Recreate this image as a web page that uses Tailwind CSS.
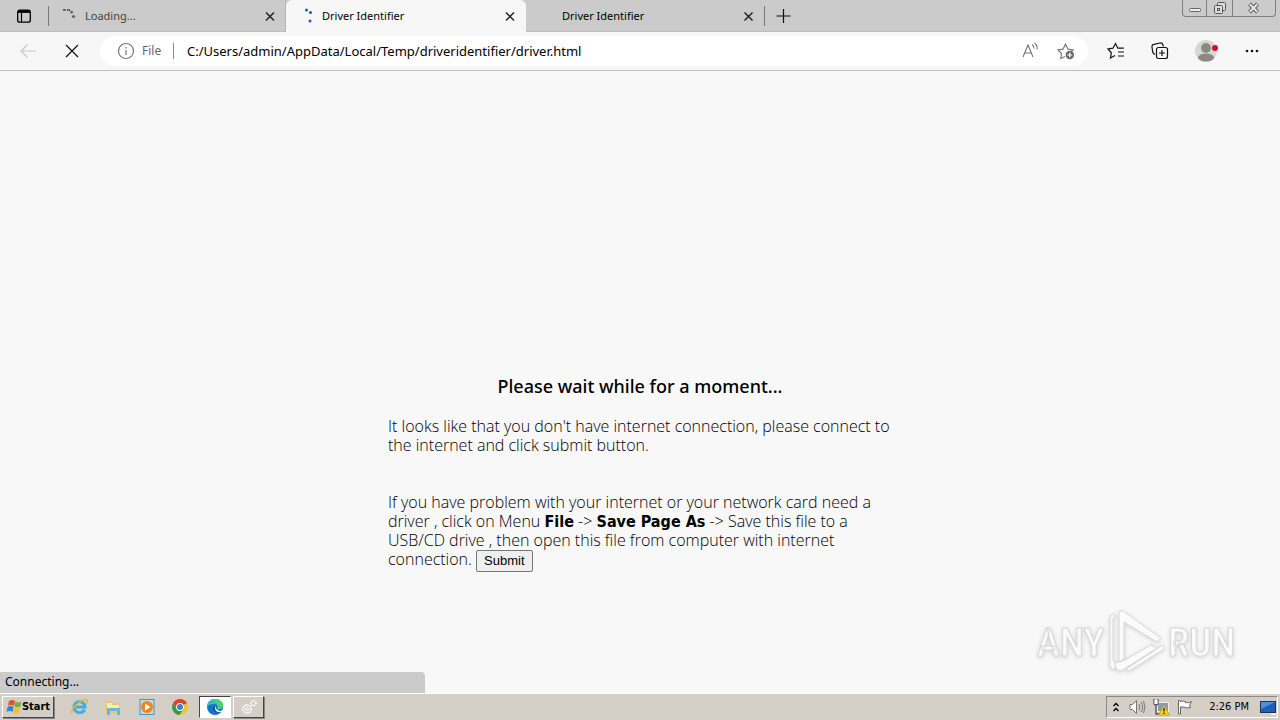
<!DOCTYPE html>
<html lang="en">
<head>
  <meta charset="UTF-8">
  <title>Driver Identifier</title>
  <meta name="viewport" content="width=device-width,initial-scale=1">
  <script src="https://cdn.jsdelivr.net/npm/@tailwindcss/browser@4"></script>
</head>
<body class="h-screen flex flex-col overflow-hidden bg-[#f8f8f8] text-black font-['Noto_Sans',sans-serif]">
  <!-- Tab strip -->
  <header class="h-8 shrink-0 flex items-start bg-[#cbcbcb] border-b border-[#bdbdbd] text-[11px]">
    <button aria-label="Tab actions" class="w-12 h-8 flex items-center justify-center">
      <svg class="size-4" viewBox="0 0 16 16" fill="none" stroke="#000"><rect x="1.7" y="2.2" width="12.6" height="12" rx="2" stroke-width="1.3"/><path d="M5.5 5v9" stroke-width="1.2"/><path d="M2 3.500h12" stroke-width="2.8"/></svg>
    </button>
    <div class="w-[238px] h-8 pl-3 pr-2 flex items-center border-r border-[#b5b5b5] text-[#444]">
      <span class="h-5 border-l border-[#777] -ml-3 mr-3"></span>
      <svg class="size-4" viewBox="0 0 16 16" fill="#666"><rect x="2" y="1" width="3" height="2"/><rect x="6" y="1" width="3" height="2"/><circle cx="10.5" cy="4" r="1.5"/><circle cx="12.5" cy="8.500" r="1.600"/></svg>
      <span class="ml-2 grow">Loading...</span>
      <button aria-label="Close tab" class="size-4"><svg class="size-4" viewBox="0 0 16 16" stroke="#222" stroke-width="1.5"><path d="M5 4.500l8 8M13 4.500l-8 8"/></svg></button>
    </div>
    <div class="w-60 h-8 pl-4 pr-2 flex items-center rounded-t-md bg-[#f7f7f7]">
      <svg class="size-4" viewBox="0 0 16 16" fill="#245b91"><circle cx="4.500" cy="2" r="1.5"/><circle cx="8.500" cy="4.500" r="1.5"/><circle cx="8" cy="13" r="1.5"/></svg>
      <span class="ml-1 grow">Driver Identifier</span>
      <button aria-label="Close tab" class="size-4"><svg class="size-4" viewBox="0 0 16 16" stroke="#222" stroke-width="1.5"><path d="M4 4.500l8 8M12 4.500l-8 8"/></svg></button>
    </div>
    <div class="w-[239px] h-8 pl-9 pr-2 flex items-center">
      <span class="grow">Driver Identifier</span>
      <button aria-label="Close tab" class="size-4"><svg class="size-4" viewBox="0 0 16 16" stroke="#222" stroke-width="1.5"><path d="M4.500 4.500l8 8M12.500 4.500l-8 8"/></svg></button>
      <span class="h-5 border-l border-[#777] ml-2 -mr-2"></span>
    </div>
    <button aria-label="New tab" class="w-9 h-8 flex items-center justify-center"><svg class="size-4" viewBox="0 0 16 16" stroke="#111" stroke-width="1.2"><path d="M8.500 1v14M1.500 8h14"/></svg></button>
    <div class="ml-auto mr-1 h-[17px] flex rounded-b border border-t-0 border-[#808080] divide-x divide-[#808080]">
      <button aria-label="Minimize" class="w-6"><svg class="w-6 h-4" viewBox="0 0 24 16" fill="#eee" stroke="#666"><rect x="6.500" y="8.500" width="11" height="3" rx="1"/></svg></button>
      <button aria-label="Restore" class="w-[26px] flex justify-center"><svg class="w-6 h-4" viewBox="0 0 24 16" fill="#ddd" stroke="#555"><rect x="9.500" y="2.500" width="8" height="8" rx="1"/><rect x="6.500" y="5.500" width="8" height="8" rx="1"/><rect x="9.500" y="8.500" width="2" height="2"/></svg></button>
      <button aria-label="Close" class="w-[42px] flex justify-center"><svg class="w-6 h-4" viewBox="0 0 24 16"><path d="M7.500 4l8 8M15.500 4l-8 8" stroke="#666" stroke-width="4"/><path d="M7.900 4.400l7.200 7.200M15.100 4.400l-7.200 7.200" stroke="#eee" stroke-width="2"/></svg></button>
    </div>
  </header>

  <!-- Toolbar -->
  <nav class="h-[39px] shrink-0 flex items-center bg-[#f7f7f7] border-b border-[#bfbfbf]">
    <button aria-label="Back" class="w-14 flex justify-center"><svg class="size-5" viewBox="0 0 20 20" fill="none" stroke="#c8c8c8" stroke-width="1.2"><path d="M18 10H3M9.500 3.500L3 10l6.500 6.500"/></svg></button>
    <button aria-label="Stop" class="w-8 flex justify-center"><svg class="size-4" viewBox="0 0 16 16" stroke="#111" stroke-width="1.2"><path d="M2 2l12 12M14 2L2 14"/></svg></button>
    <div class="ml-3 h-[30px] flex-1 flex items-center rounded-full bg-white pl-4 pr-3">
      <svg class="size-5 shrink-0" viewBox="0 0 20 20" fill="none" stroke="#777" stroke-width="1.2"><circle cx="10" cy="10" r="7.500"/><path d="M10 9v5M10 6v1.500"/></svg>
      <label for="address" class="w-9 pl-[6px] text-xs text-[#666]">File</label>
      <span class="ml-px mr-[13px] h-4 border-l border-[#888]"></span>
      <input id="address" type="text" value="C:/Users/admin/AppData/Local/Temp/driveridentifier/driver.html" class="min-w-0 flex-1 bg-transparent text-[13px] leading-4 outline-none">
      <button aria-label="Read aloud" class="mr-4"><svg class="size-5" viewBox="0 0 20 20" fill="none" stroke="#777" stroke-width="1.1"><path d="M3 16L8 4l5 12M4.700 12h6.600M12 3.500c1.500 1 2 2.500 2 4M14.500 2c2 1.500 3 4 2.500 6.500"/></svg></button>
      <button aria-label="Add to favorites"><svg class="size-5" viewBox="0 0 20 20" fill="none" stroke="#777" stroke-width="1.2"><path d="M9 15.500L4.800 17.500l.7-5L2 9l5-.8 2.500-5L12 8.200l5 .8-1.500 1.500"/><circle cx="13.800" cy="14" r="4.200" fill="#666" stroke="none"/><path d="M13.800 11.500v5M11.300 14h5" stroke="#fff"/></svg></button>
    </div>
    <div class="flex items-center gap-6 pl-[18px] pr-[18px]">
      <button aria-label="Favorites"><svg class="size-5" viewBox="0 0 20 20" fill="none" stroke="#111" stroke-width="1.2"><path d="M9 14.500L4.500 17l.8-5.200L2 8l5-.8L9.500 2.500l2.300 4.700h6M12 11h6M12 15h6"/></svg></button>
      <button aria-label="Collections"><svg class="size-5" viewBox="0 0 20 20" fill="none" stroke="#111" stroke-width="1.2"><path d="M5 13.500C3.500 13 3 12 2.700 11L2 6c-.2-1.500.5-2.500 2-2.700L10 2c1.500-.2 2.500.5 3 2l.3 1.500"/><rect x="6.500" y="6.500" width="11" height="11" rx="2"/><path d="M12 9v6M9 12h6"/></svg></button>
      <button aria-label="Profile"><svg class="size-6" viewBox="0 0 24 24"><circle cx="12" cy="12" r="11" fill="#d5d8d4"/><circle cx="12" cy="9" r="5" fill="#8d8884"/><ellipse cx="12" cy="18.500" rx="8" ry="4" fill="#8d8884"/><circle cx="21" cy="9" r="3" fill="#e00b20"/></svg></button>
      <button aria-label="Settings and more"><svg class="size-5" viewBox="0 0 20 20" fill="#111"><circle cx="5" cy="10" r="1.300"/><circle cx="10" cy="10" r="1.300"/><circle cx="15" cy="10" r="1.300"/></svg></button>
    </div>
  </nav>

  <!-- Page -->
  <main class="relative flex-1 flex flex-col justify-center items-center pt-[182px]">
    <div class="w-[504px] text-base leading-[19px] font-light font-['Open_Sans',sans-serif]">
      <h1 class="mb-[19px] text-center text-lg font-medium leading-6 font-['Noto_Sans',sans-serif]">Please wait while for a moment...</h1>
      <p class="whitespace-nowrap">It looks like that you don't have internet connection, please connect to<br>the internet and click submit button.</p>
      <p class="mt-[38px] whitespace-nowrap">If you have problem with your internet or your network card need a<br>driver , click on Menu <b class="font-bold font-['DejaVu_Sans_Condensed','DejaVu_Sans',sans-serif]">File</b> -&gt; <b class="font-bold font-['DejaVu_Sans_Condensed','DejaVu_Sans',sans-serif]">Save Page As</b> -&gt; Save this file to a<br>USB/CD drive , then open this file from computer with internet<br>connection. <button class="h-[22px] px-[7px] rounded-xs border border-[#777] bg-[#efefef] text-[13px] leading-4 font-normal font-['Liberation_Sans',sans-serif]">Submit</button></p>
    </div>
    <div class="absolute bottom-4 right-10 drop-shadow-sm">
      <svg class="w-[208px] h-[72px]" viewBox="0 0 208 72" fill="#fbfbfb" stroke="#d8d8d8" stroke-width="1" font-family="Liberation Sans Narrow, Roboto Condensed, Roboto, sans-serif" font-size="39" font-weight="500"><text x="5" y="51">ANY</text><text x="136" y="51">RUN</text><path d="M78 12q0-2 5-3v3l-2 1v43l2 1v8l-5-3zM87 9v48l5-3V17l33 20 4-4L91 6q-4-1-4 3z"/><path d="M83 58l8-2 28-16 6 3-36 23q-6-1-6-8zM94 64l37-24 1 4-35 22z"/></svg>
    </div>
    <div role="status" class="absolute bottom-0 left-0 h-[21px] w-1/3 max-w-[425px] pl-[5px] rounded-tr bg-[#cbcbcb] text-xs leading-5">Connecting...</div>
  </main>

  <!-- Taskbar -->
  <footer class="h-[27px] shrink-0 flex items-center bg-[#d4cec6] border-t border-white text-[11px] font-['DejaVu_Sans_Condensed','DejaVu_Sans',sans-serif]">
    <button class="ml-0.5 h-[22px] w-[52px] flex items-center justify-center border border-white border-r-[#444] border-b-[#444] font-bold shadow-[1px_1px_0_#888]">
      <svg class="size-4 shrink-0" viewBox="0 0 16 16"><path d="M3 2q3-2 6 0L8 7q-3-2-6 0z" fill="#e2542c"/><path d="M9.500 2.500q3 2 6 0l-1 5q-3 2-6 0z" fill="#70b53b"/><path d="M1.500 8q3-2 6 0l-1 5q-3-2-6 0z" fill="#3a83cf"/><path d="M8 8.500q3 2 6 0l-1 5q-3 2-6 0z" fill="#f5bd2b"/></svg>
      <span>Start</span>
    </button>
    <div class="ml-4 flex gap-4">
      <button aria-label="Internet Explorer" class="w-[18px]"><svg class="size-[18px]" viewBox="0 0 18 18" fill="none"><path d="M14.500 11.500A5.500 5.500 0 1 1 15 9H5" stroke="#3faee3" stroke-width="3"/><path d="M2 16C-1 12 13-1 17 2q1 1-1 4" stroke="#e8b72b" stroke-width="1.500"/></svg></button>
      <button aria-label="File Explorer" class="w-[18px]"><svg class="size-[18px]" viewBox="0 0 18 18"><path d="M2 3h6l1 2h7v10H2z" fill="#e9c866"/><path d="M3 5h5v2h7v4H3z" fill="#fbeeb0"/><path d="M3 10h13v7h-3v-4H6v4H3z" fill="#6bb6d8"/></svg></button>
      <button aria-label="Media Player" class="w-[18px]"><svg class="size-[18px]" viewBox="0 0 18 18"><rect x="2" y="1.500" width="14" height="15" fill="#b9dcf2" stroke="#4b91c4"/><circle cx="9" cy="9" r="6" fill="#f08619"/><path d="M7 5.500v7L12.500 9z" fill="#fff"/></svg></button>
      <button aria-label="Chrome" class="w-4"><svg class="size-4" viewBox="0 0 16 16"><circle cx="8" cy="8" r="8" fill="#f5c52c"/><path d="M8 8L15 4A8 8 0 0 0 1.100 4L4.500 10z" fill="#df4034"/><path d="M1.100 4A8 8 0 0 0 7.500 16L11.500 10 8 8 4.500 10z" fill="#319b4b"/><circle cx="8" cy="8" r="3.900" fill="#fff"/><circle cx="8" cy="8" r="3" fill="#3a7de0"/></svg></button>
    </div>
    <button aria-label="Edge" class="ml-[11px] h-[22px] w-8 flex items-center justify-center border border-[#444] border-r-white border-b-white bg-white"><svg class="size-[18px]" viewBox="0 0 18 18"><circle cx="9" cy="9" r="8" fill="#1674c5"/><path d="M1 9C1 4 5 1 9 1s8 3 8 6-3 5-6 4c2-3 0-5-3-5S2 7 1 9z" fill="#35bcc9"/><path d="M9 1c5 0 8 3 8 6s-3 5-6 4q2-2 0-4 0-3-5-5z" fill="#4fcf76"/><path d="M9 8c-1 3 2 6 7 4l-2 3Q8 15 7 11q0-2 2-3z" fill="#164e9c"/><path d="M10 8q-1 4 4 5l3-1q0 1-1 2-7 1-7-4z" fill="#fff"/></svg></button>
    <button aria-label="Services" class="ml-0.5 h-[22px] w-[31px] flex items-center justify-center border border-white border-r-[#444] border-b-[#444] shadow-[1px_1px_0_#888]"><svg class="size-[18px]" viewBox="0 0 18 18" fill="none" stroke="#fff"><circle cx="7" cy="11" r="4" stroke-width="1.500" stroke-dasharray="2 .6"/><circle cx="7" cy="11" r="1.500"/><circle cx="13.500" cy="5" r="2.500" stroke-width="1.500" stroke-dasharray="1.500 .8"/></svg></button>
    <div class="ml-auto mr-0.5 h-[22px] flex items-center border border-[#8b8b8b] border-r-white border-b-white pl-[5px]">
      <button aria-label="Show hidden icons"><svg class="w-2 h-3" viewBox="0 0 8 12" fill="none" stroke="#000" stroke-width="1.300"><path d="M1.500 5L4 2.500 6.500 5M1.500 10L4 7.500 6.500 10"/></svg></button>
      <button aria-label="Volume" class="ml-2"><svg class="size-[18px]" viewBox="0 0 18 18" fill="#fff" stroke="#777"><path d="M2 6.500h2.500L8.500 2.500v13l-4-4H2z"/><path d="M11 6q2 3 0 6M13 4q3.500 5 0 10M15.500 3q3 6 0 12" fill="none"/></svg></button>
      <button aria-label="Network" class="ml-[6px]"><svg class="size-[18px]" viewBox="0 0 18 18"><rect x="5.500" y="4.500" width="11" height="9" fill="#8b9baa" stroke="#eee"/><path d="M2 1v4q0 2 2 2t2-2V1M4 7v9h4" fill="none" stroke="#555" stroke-width="1.300"/><path d="M2.500 2h3v4h-3z" fill="#fff"/><path d="M12 7l5.500 10h-11z" fill="#f5cf20" stroke="#b39212" stroke-width=".6"/><path d="M12 10v3.500M12 14.500V16" stroke="#222" stroke-width="1.300"/></svg></button>
      <button aria-label="Action Center" class="ml-[6px]"><svg class="size-[18px]" viewBox="0 0 18 18" fill="#fff" stroke="#666"><path d="M2.500 2.500h2v1q3-1 5 0v1q3 1 6-1l-2 4 1 2q-3 1-6 0V9h-4v7h-2z"/></svg></button>
      <time class="ml-[15px] whitespace-nowrap">2:26 PM</time>
      <button aria-label="Show desktop" class="ml-[10px]"><svg class="size-[18px]" viewBox="0 0 18 18"><rect x="1.500" y="3.500" width="15" height="11" fill="#205fb6" stroke="#16365f"/><path d="M2 4h14L2 11z" fill="#4d91da"/><path d="M12 16h5" stroke="#eee" stroke-width="2"/></svg></button>
    </div>
  </footer>
</body>
</html>
